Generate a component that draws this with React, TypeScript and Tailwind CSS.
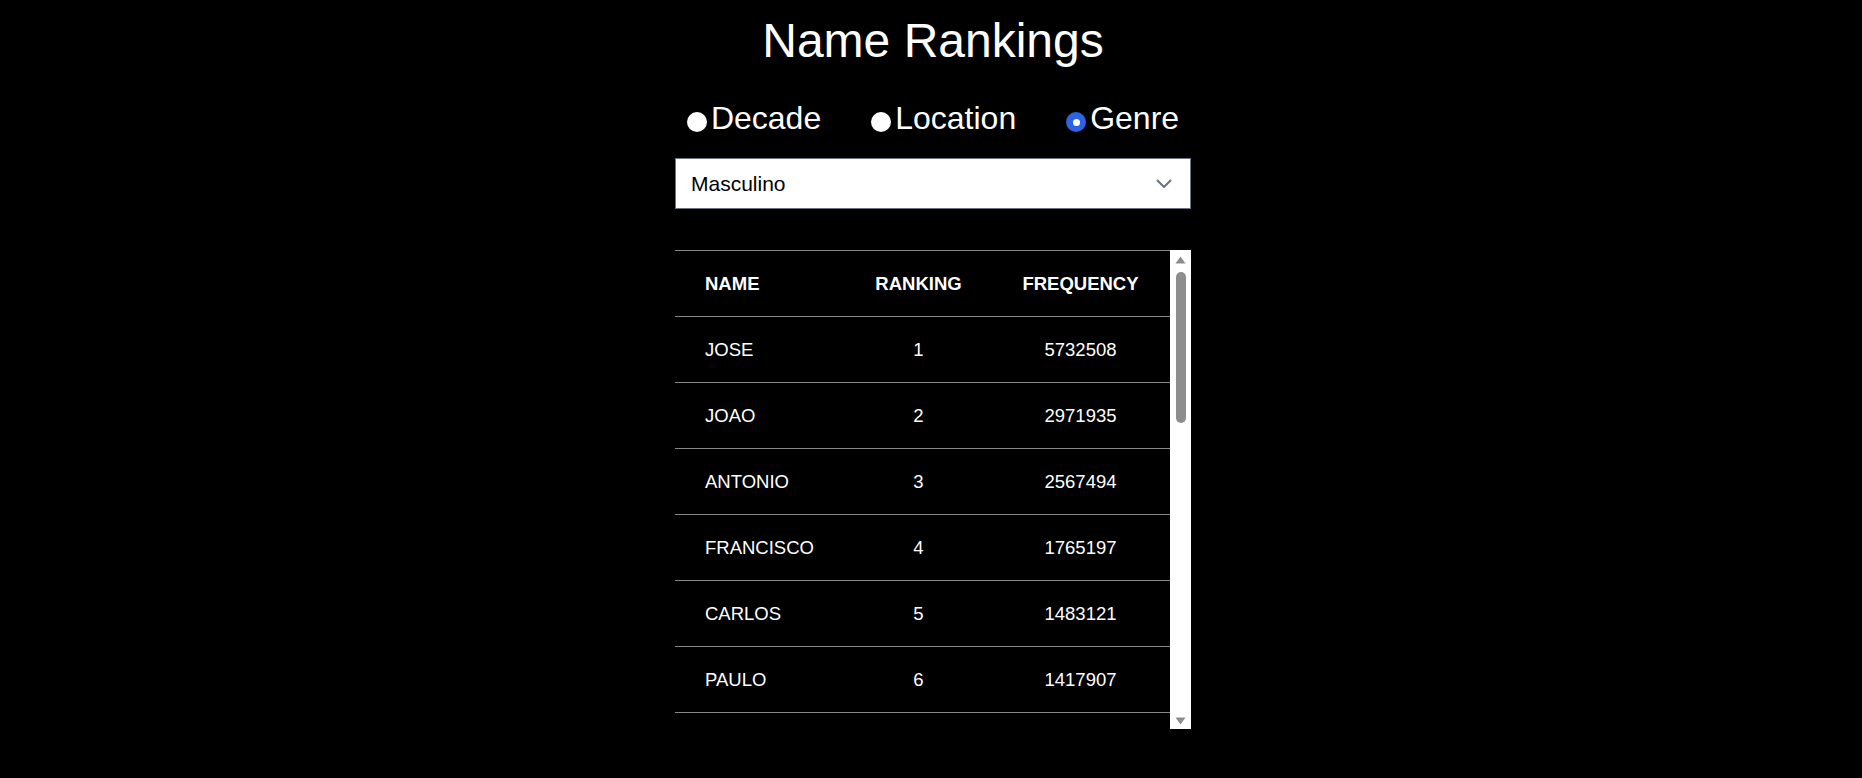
import React from "react";

const rows = [
  { name: "JOSE", rank: 1, freq: 5732508 },
  { name: "JOAO", rank: 2, freq: 2971935 },
  { name: "ANTONIO", rank: 3, freq: 2567494 },
  { name: "FRANCISCO", rank: 4, freq: 1765197 },
  { name: "CARLOS", rank: 5, freq: 1483121 },
  { name: "PAULO", rank: 6, freq: 1417907 },
];

function Radio({ label, checked }: { label: string; checked?: boolean }) {
  return (
    <label className="flex items-center gap-[4px] text-[32px] leading-[37px] text-white">
      {checked ? (
        <span className="mt-[7px] flex h-[20px] w-[20px] items-center justify-center rounded-full bg-[#2c64e3]">
          <span className="h-[7px] w-[7px] rounded-full bg-white" />
        </span>
      ) : (
        <span className="mt-[7px] h-[20px] w-[20px] rounded-full bg-white" />
      )}
      <span>{label}</span>
    </label>
  );
}

export default function App() {
  return (
    <div
      className="flex min-h-screen w-full justify-center bg-black pl-[4px] text-white"
      style={{ fontFamily: '"Liberation Sans", Arial, sans-serif' }}
    >
      <div className="flex w-[516px] flex-col">
        <h1 className="mt-[17px] text-center text-[48px] leading-[48px] font-normal">Name Rankings</h1>

        <div className="mt-[35px] flex justify-center gap-[50px]">
          <Radio label="Decade" />
          <Radio label="Location" />
          <Radio label="Genre" checked />
        </div>

        <div className="mt-[21px] flex h-[51px] items-center justify-between border border-[#6b7280] bg-white pl-[15px] pr-[18px] text-[21px] text-black">
          <span>Masculino</span>
          <svg width="16" height="10" viewBox="0 0 16 10" fill="none">
            <path d="M1.5 1.5 L8 8 L14.5 1.5" stroke="#6b7280" strokeWidth="2" strokeLinecap="round" strokeLinejoin="round" />
          </svg>
        </div>

        <div className="mt-[41px] flex h-[479px] overflow-hidden">
          <div className="flex-1 border-t border-[#888888] text-[18.5px]">
            <div className="grid h-[66px] grid-cols-[171px_145px_179px] items-center border-b border-[#888888] font-bold">
              <div className="pl-[30px]">NAME</div>
              <div className="text-center">RANKING</div>
              <div className="text-center">FREQUENCY</div>
            </div>
            {rows.map((r) => (
              <div
                key={r.name}
                className="grid h-[66px] grid-cols-[171px_145px_179px] items-center border-b border-[#888888]"
              >
                <div className="pl-[30px]">{r.name}</div>
                <div className="text-center">{r.rank}</div>
                <div className="text-center">{r.freq}</div>
              </div>
            ))}
          </div>
          <div className="flex w-[21px] flex-col items-center bg-white">
            <svg className="mt-[6px]" width="11" height="8" viewBox="0 0 11 8">
              <path d="M5.5 0.5 L10.5 7.5 L0.5 7.5 Z" fill="#8d8d8d" />
            </svg>
            <div className="mt-[8px] h-[151px] w-[10px] rounded-full bg-[#8d8d8d]" />
            <div className="flex-1" />
            <svg className="mb-[4px]" width="11" height="8" viewBox="0 0 11 8">
              <path d="M0.5 0.5 L10.5 0.5 L5.5 7.5 Z" fill="#8d8d8d" />
            </svg>
          </div>
        </div>
      </div>
    </div>
  );
}
